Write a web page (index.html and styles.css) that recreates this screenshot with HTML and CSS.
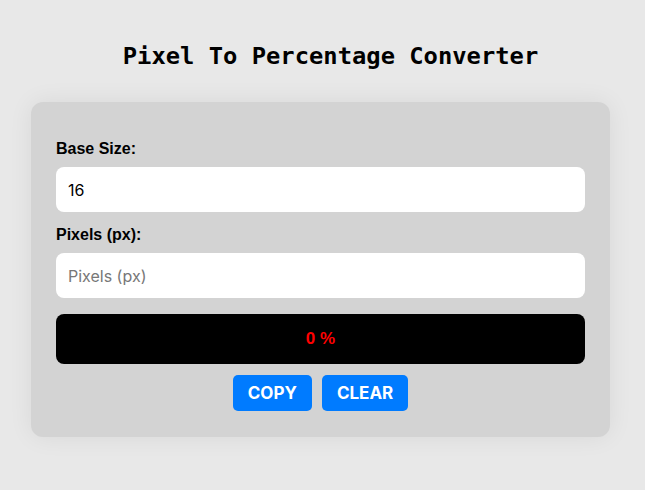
FILE: index.html
```html
<!DOCTYPE html>
<html lang="en">
<head>
<meta charset="utf-8">
<title>Pixel To Percentage Converter</title>
<link rel="stylesheet" href="styles.css">
</head>
<body>
<main class="page">
  <h1 class="title">Pixel To Percentage Converter</h1>
  <section class="card">
    <label class="label" for="base">Base Size:</label>
    <input class="field" id="base" type="text" value="16">
    <label class="label label-second" for="px">Pixels (px):</label>
    <input class="field" id="px" type="text" placeholder="Pixels (px)">
    <div class="result">0 %</div>
    <div class="actions">
      <button class="btn btn-copy">COPY</button>
      <button class="btn btn-clear">CLEAR</button>
    </div>
  </section>
</main>
</body>
</html>
```

FILE: styles.css
```css
* { box-sizing: border-box; }
html, body { margin: 0; padding: 0; }
body {
  background: #e8e8e8;
  font-family: "Liberation Sans", Arial, sans-serif;
  width: 645px;
  height: 490px;
  overflow: hidden;
}
.page {
  display: flex;
  flex-direction: column;
  align-items: center;
  padding-top: 41px;
}
.title {
  margin: 0;
  padding-left: 16px;
  font-family: "DejaVu Sans Mono", monospace;
  font-weight: bold;
  font-size: 23.8px;
  line-height: 30px;
  color: #000;
}
.card {
  margin-top: 31px;
  margin-right: 4px;
  width: 579px;
  background: #d3d3d3;
  border-radius: 12px;
  box-shadow: 0 0 24px rgba(0, 0, 0, 0.07);
  padding: 37px 25px 26px;
  display: flex;
  flex-direction: column;
}
.label {
  font-family: "Liberation Sans", Arial, sans-serif;
  font-weight: bold;
  font-size: 16px;
  line-height: 20px;
  color: #000;
  margin-bottom: 8px;
}
.label-second { margin-top: 13px; }
.field {
  height: 45px;
  width: 100%;
  border: none;
  border-radius: 8px;
  background: #fff;
  padding: 0 12px;
  font-family: Inter, "Noto Sans", sans-serif;
  font-size: 16px;
  color: #000;
  outline: none;
}
.field::placeholder { color: #777; }
.result {
  margin-top: 16px;
  height: 50px;
  background: #000;
  border-radius: 8px;
  display: flex;
  align-items: center;
  justify-content: center;
  color: #f00;
  font-family: "Liberation Sans", Arial, sans-serif;
  font-weight: bold;
  font-size: 17px;
}
.actions {
  margin-top: 11px;
  display: flex;
  justify-content: center;
  gap: 10px;
}
.btn {
  height: 36px;
  border: none;
  border-radius: 5px;
  background: #007bff;
  color: #fff;
  font-family: Inter, "Noto Sans", sans-serif;
  font-weight: bold;
  font-size: 17px;
  padding: 0 15px;
  cursor: pointer;
}
```
